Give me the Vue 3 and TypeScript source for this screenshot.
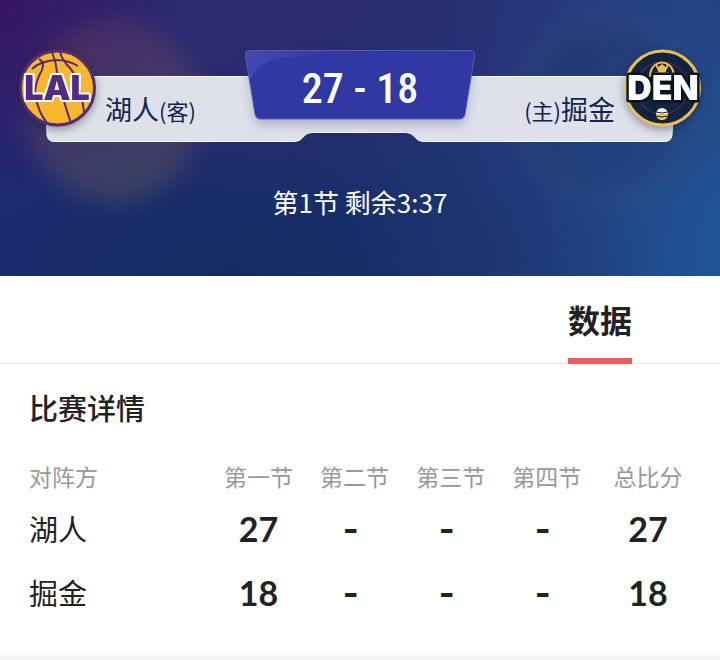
<script setup lang="ts">
interface TeamRow {
  name: string
  quarters: (number | null)[]
  total: number
}

const periods: string[] = ['第一节', '第二节', '第三节', '第四节']

const away: TeamRow = { name: '湖人', quarters: [27, null, null, null], total: 27 }
const home: TeamRow = { name: '掘金', quarters: [18, null, null, null], total: 18 }
const rows: TeamRow[] = [away, home]
</script>

<template>
  <main class="page">
    <header class="hero">
      <div class="glow glow-away"></div>
      <div class="glow glow-home"></div>

      <div class="scoreboard">
        <svg class="plate" viewBox="0 0 632 66" preserveAspectRatio="none" aria-hidden="true">
          <path
            d="M0 .5H632L629 59Q628 65.500 622 65.500H379Q374 65.500 370 60Q367 56.500 362 56.500H268Q263 56.500 260 60Q256 65.500 251 65.500H9Q3 65.500 2 59Z"
            fill="#dee1ea"
            stroke="#f7f8fc"
            stroke-width="1"
          />
        </svg>

        <svg class="logo" viewBox="0 0 80 80" role="img" aria-label="LAL">
          <circle cx="39.500" cy="40" r="37" fill="#f8b72f" stroke="#552b74" stroke-width="3" />
          <g fill="none" stroke="#552b74" stroke-width="2">
            <path d="M14 21Q22 13 38 12Q50 12 60 18" />
            <path d="M21 11Q27 14 24 22Q17 34 17 46Q20 64 29 75" />
            <path d="M34 4Q38 14 39 24Q44 50 53 75" />
            <path d="M42 4Q44 12 52 20Q62 32 66 64" />
          </g>
          <text class="logo-text lal" x="39" y="52" text-anchor="middle">LAL</text>
        </svg>

        <p class="team away">湖人<small>(客)</small></p>

        <div class="score">
          <svg class="badge" viewBox="0 0 230 70" preserveAspectRatio="none" aria-hidden="true">
            <defs>
              <linearGradient id="shine" x1="0" y1="0" x2="1" y2="0">
                <stop offset="0" stop-color="#4349ae" />
                <stop offset="1" stop-color="#3039a3" />
              </linearGradient>
            </defs>
            <path
              d="M5 .5H225Q230.500 .5 229.500 6L220 64Q219 69 214 69H16Q11 69 10 64L.5 6Q-.5 .5 5 .5Z"
              fill="#3039a3"
            />
            <path d="M5 .5H90Q70 6 45 7Q14 8 5 30L.5 6Q-.5 .5 5 .5Z" fill="url(#shine)" />
            <path
              d="M5 .5H225Q230.500 .5 229.500 6L220 64Q219 69 214 69H16Q11 69 10 64L.5 6Q-.5 .5 5 .5Z"
              fill="none"
              stroke="#5459b2"
              stroke-width="1"
            />
          </svg>
          <span class="score-text">{{ away.total }} - {{ home.total }}</span>
        </div>

        <p class="team home"><small>(主)</small>掘金</p>

        <svg class="logo" viewBox="0 0 80 80" role="img" aria-label="DEN">
          <circle cx="40.500" cy="40" r="37" fill="#10233f" stroke="#eac052" stroke-width="3" />
          <circle cx="40" cy="40" r="26" fill="none" stroke="#7a2845" stroke-width="1" />
          <g fill="none" stroke="#eac052" stroke-width="2">
            <path d="M28 29Q28 21 33 17Q40 12 47 17Q52 21 52 29" />
            <path d="M34 16L36 21M46 16L44 21M28 27L36 25M52 27L44 25M36 25L34 31M44 25L46 31" />
          </g>
          <path d="M40 16L45 20L43 26H37L35 20Z" fill="#eac052" />
          <circle cx="40" cy="66" r="6" fill="#f6f2e4" />
          <path d="M34 66H46A6 6 0 0 1 34 66Z" fill="#eac052" />
          <path d="M34 64Q40 66 46 64M34 68Q40 70 46 68" fill="none" stroke="#10233f" stroke-width="1" />
          <text class="logo-text den" x="41" y="52" text-anchor="middle">DEN</text>
        </svg>
      </div>

      <p class="clock">第1节 剩余3:37</p>
    </header>

    <nav class="tabs">
      <button type="button" class="tab" aria-current="page">数据</button>
    </nav>

    <section class="details">
      <h2>比赛详情</h2>
      <table>
        <colgroup>
          <col class="col-team" />
          <col v-for="period in periods" :key="period" class="col-period" />
          <col />
        </colgroup>
        <thead>
          <tr>
            <th scope="col" class="label">对阵方</th>
            <th v-for="period in periods" :key="period" scope="col">{{ period }}</th>
            <th scope="col">总比分</th>
          </tr>
        </thead>
        <tbody>
          <tr v-for="row in rows" :key="row.name">
            <th scope="row" class="label">{{ row.name }}</th>
            <td v-for="(points, i) in row.quarters" :key="i" :class="{ pending: points === null }">
              {{ points ?? '-' }}
            </td>
            <td>{{ row.total }}</td>
          </tr>
        </tbody>
      </table>
    </section>
  </main>
</template>

<style>
body {
  margin: 0;
  background: #f3f4f6;
}
</style>

<style scoped>
.page {
  font-family: 'Noto Sans CJK SC', sans-serif;
  color: #222;
}

.hero {
  position: relative;
  overflow: hidden;
  box-sizing: border-box;
  min-height: 276px;
  padding: 48px 18px 0;
  background:
    radial-gradient(ellipse 25% 70% at 0% 0%, #371562 0%, rgba(55, 21, 98, 0) 100%),
    radial-gradient(ellipse 60% 75% at 36% 0%, #2e2a70 0%, rgba(46, 42, 112, 0) 100%),
    radial-gradient(ellipse 60% 75% at 32% 100%, #152c63 0%, rgba(21, 44, 99, 0) 100%),
    radial-gradient(ellipse 35% 75% at 100% 0%, #244382 0%, rgba(36, 67, 130, 0) 100%),
    linear-gradient(100deg, #23297a 0%, #1f3070 45%, #233f80 75%, #205596 100%);
}

.glow {
  position: absolute;
  border-radius: 50%;
  filter: blur(12px);
}

.glow-away {
  top: 18px;
  left: 26px;
  width: 176px;
  height: 184px;
  background: linear-gradient(#6a3e5c, #6a6258);
  opacity: 0.4;
}

.glow-home {
  top: 14px;
  right: 20px;
  box-sizing: border-box;
  width: 184px;
  height: 190px;
  border: 9px solid #4a6a86;
  background: #1d3568;
  opacity: 0.28;
}

.scoreboard {
  position: relative;
  display: grid;
  grid-template-columns: 80px 1fr 230px 1fr 80px;
  align-items: start;
  height: 94px;
}

.plate {
  position: absolute;
  top: 28px;
  left: 27px;
  width: calc(100% - 54px);
  height: 66px;
}

.logo {
  position: relative;
  width: 80px;
  height: 80px;
  overflow: visible;
  filter: drop-shadow(0 3px 4px rgba(16, 20, 50, 0.4));
}

.logo-text {
  font-family: Inter, 'Open Sans', sans-serif;
  font-size: 34px;
  font-weight: 900;
  paint-order: stroke;
  stroke-linejoin: round;
}

.lal {
  fill: #552b82;
  stroke: #fff;
  stroke-width: 4px;
}

.den {
  fill: #fff;
  stroke: #061522;
  stroke-width: 5px;
}

.team {
  position: relative;
  margin: 0;
  padding-top: 41px;
  font-size: 27px;
  line-height: 40px;
  white-space: nowrap;
  color: #14234f;
}

.team small {
  font-size: 22px;
}

.away {
  padding-left: 7px;
}

.home {
  padding-right: 7px;
  text-align: right;
}

.score {
  position: relative;
  height: 70px;
  margin-top: 2px;
  text-align: center;
}

.badge {
  position: absolute;
  inset: 0;
  width: 100%;
  height: 100%;
  filter: drop-shadow(0 6px 5px rgba(50, 50, 110, 0.25));
}

.score-text {
  position: relative;
  font-family: 'Roboto Condensed', 'Liberation Sans Narrow', Roboto, sans-serif;
  font-size: 42px;
  font-weight: 500;
  line-height: 78px;
  white-space: nowrap;
  color: #fff;
}

.clock {
  position: relative;
  margin: 40px 0 0;
  font-size: 26px;
  line-height: 40px;
  text-align: center;
  color: #fff;
}

.tabs {
  display: flex;
  justify-content: flex-end;
  padding-right: 88px;
  border-bottom: 1px solid #e5e5e5;
  background: #fff;
}

.tab {
  height: 88px;
  margin: 0 0 -1px;
  padding: 4px 0 0;
  border: 0;
  border-bottom: 6px solid #f05c5c;
  background: none;
  font: inherit;
  font-size: 32px;
  font-weight: 700;
  color: #222;
}

.details {
  padding: 23px 19px 31px 29px;
  background: #fff;
}

h2 {
  margin: 0 0 28px;
  font-size: 29px;
  font-weight: 500;
  line-height: 40px;
}

table {
  width: 100%;
  border-collapse: collapse;
  table-layout: fixed;
}

.col-team {
  width: 27%;
}

.col-period {
  width: 14.3%;
}

th,
td {
  padding: 0;
  text-align: center;
}

thead th {
  height: 41px;
  font-size: 23px;
  font-weight: 400;
  line-height: 40px;
  color: #999;
}

tbody th {
  font-size: 29px;
  font-weight: 400;
}

th.label {
  text-align: left;
}

tbody tr {
  height: 64px;
}

td {
  font-family: Lato, sans-serif;
  font-size: 34px;
  font-weight: 700;
}

.pending {
  padding-right: 8px;
  font-family: Inter, sans-serif;
}
</style>
